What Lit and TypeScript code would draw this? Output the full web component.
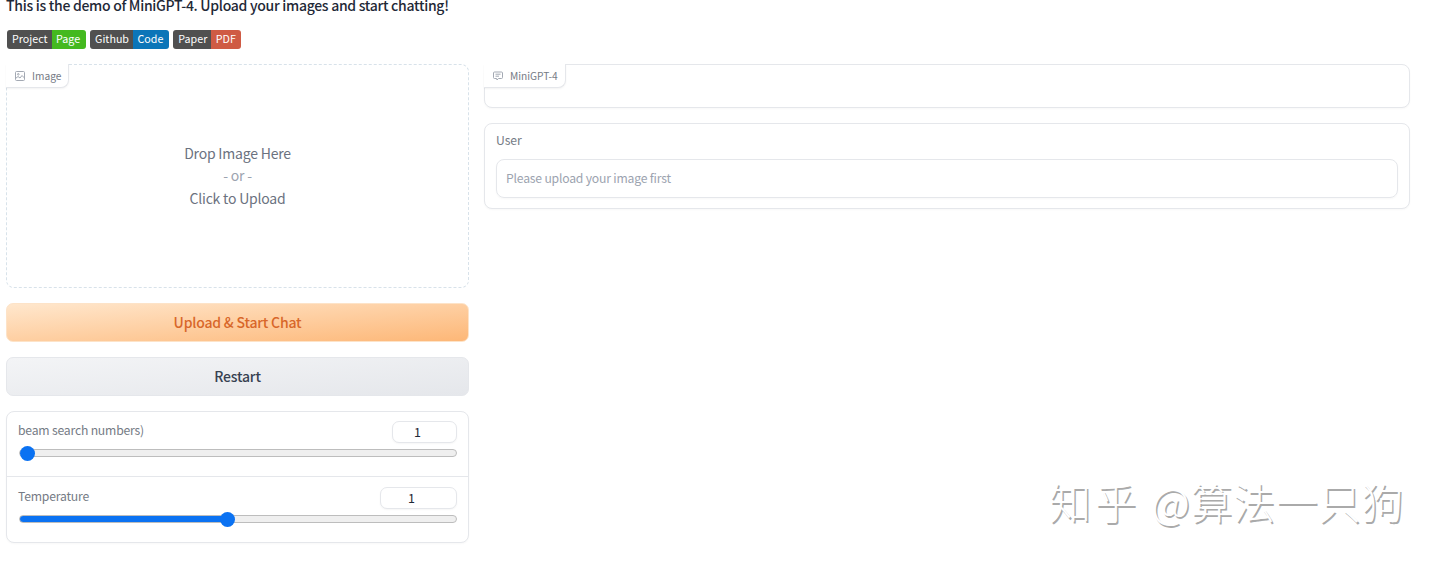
import { LitElement, html, css } from "lit";
import { customElement } from "lit/decorators.js";

@customElement("app-slider")
class AppSlider extends LitElement {
  static properties = { label: {}, pct: { type: Number }, numw: { type: Number } };
  label = "";
  pct = 0;
  numw = 65;
  static styles = css`
    :host { display: block; padding: 9px 11px 0 11px; height: 55px; box-sizing: content-box; }
    :host(.second) { padding-top: 10px; }
    .top { display: flex; justify-content: space-between; align-items: flex-start; height: 22px; }
    .lab { font-size: 12.2px; letter-spacing: -0.2px; color: #757b85; line-height: 18px; }
    .num { height: 22px; box-sizing: border-box; border: 1px solid #e5e7eb; border-radius: 7px;
      background: #fff; font: 12.5px/20px "Noto Sans CJK SC", "Noto Sans", sans-serif; color: #1f2937;
      text-align: center; padding: 0 14px 0 0; box-shadow: 0 1px 2px rgba(0,0,0,.04); }
    input { -webkit-appearance: none; appearance: none; display: block; width: 438px; height: 16px;
      margin: 2px 0 0 1px; background: transparent; outline: none; }
    input::-webkit-slider-runnable-track { height: 8px; border-radius: 4px; box-sizing: border-box;
      border: 1px solid #bdbdbd; background: linear-gradient(to right, #0b72f2 var(--p), #efefef var(--p)); }
    input::-webkit-slider-thumb { -webkit-appearance: none; width: 15px; height: 15px; border-radius: 50%;
      background: #0b72f2; margin-top: -4.5px; border: 0; }
  `;
  render() {
    return html`<div class="top"><span class="lab">${this.label}</span>
      <div class="num" style="width:${this.numw}px">1</div></div>
      <input type="range" min="0" max="100" step="0.1" .value=${String(this.pct)} style="--p:${this.pct}%" />`;
  }
}

@customElement("app-root")
class AppRoot extends LitElement {
  static styles = css`
    :host { display: block; width: 1440px; height: 564px; overflow: hidden; position: relative; background: #fff;
      font-family: "Noto Sans CJK SC", "Noto Sans", sans-serif; color: #374151; }
    .wrap { padding: 0 30px 0 6px; }
    .intro { margin: -5px 0 0 0; font-size: 14px; letter-spacing: -0.29px; line-height: 20px; font-weight: 500; color: #1f2937; white-space: nowrap; }
    .badges { display: flex; gap: 4.5px; margin: 15px 0 0 1px; height: 19px; }
    .badge { display: flex; height: 18.5px; border-radius: 3px; overflow: hidden; font-size: 10.7px; line-height: 18px; color: #fff; }
    .badge .k { background: #505050; padding: 0 4px 0 5px; }
    .badge .v { padding: 0 5.5px 0 4.5px; }
    .g { background: #44b91f; } .b { background: #0b75b8; } .r { background: #cf5b44; }
    .cols { display: grid; grid-template-columns: 463px 926px; gap: 15px; margin-top: 15px; align-items: start; }
    .col { display: flex; flex-direction: column; gap: 15px; }
    .panel { border: 1px solid #e5e7eb; border-radius: 8px; background: #fff; box-sizing: border-box; position: relative; box-shadow: 0 1px 2px rgba(0,0,0,.03); }
    .tag { display: flex; align-items: center; gap: 7px; height: 24px; box-sizing: border-box; padding: 0 7px 0 9px; width: max-content;
      margin: -1px 0 0 -1px; border: 1px solid #e5e7eb; border-top: 0; border-left: 0; border-radius: 0 0 8px 0;
      font-size: 10.2px; color: #757b85; background: #fff; box-shadow: 0 1px 2px rgba(0,0,0,.05); }
    .tag svg { display: block; }
    .drop { height: 224px; border: 1px dashed #d8e2ea; box-shadow: none; display: flex; flex-direction: column; }
    .dropt { flex: 1; display: flex; flex-direction: column; align-items: center; justify-content: center;
      font-size: 14px; letter-spacing: -0.2px; line-height: 22.5px; color: #6b7280; padding-bottom: 24px; }
    .dropt span:nth-child(2) { color: #9ca3af; }
    .btn { height: 39px; border-radius: 7px; display: flex; align-items: center; justify-content: center;
      font-size: 14px; letter-spacing: -0.2px; font-weight: 500; box-sizing: border-box; padding-bottom: 1px; }
    .prim { background: linear-gradient(to bottom right, #ffe7cd, #fdb777); border: 1px solid #fde3c8; color: #d8672a; }
    .sec { background: linear-gradient(to bottom right, #f3f4f6, #e5e7eb); border: 1px solid #e5e7eb; color: #374151; }
    .sliders { height: 132px; }
    .sliders app-slider + app-slider { border-top: 1px solid #e5e7eb; }
    .chat { height: 44px; }
    .user { height: 86px; padding: 8px 11px 10px; display: flex; flex-direction: column; }
    .ulabel { font-size: 12.2px; letter-spacing: -0.1px; line-height: 17px; color: #757b85; }
    .uinput { margin-top: 10px; height: 39px; box-sizing: border-box; border: 1px solid #e5e7eb; border-radius: 8px;
      padding: 0 9px 2px; display: flex; align-items: center; font-size: 12.2px; letter-spacing: -0.2px; color: #9ca3af; box-shadow: 0 1px 2px rgba(0,0,0,.03); }
    .mark { position: absolute; left: 1049px; top: 474px; font-family: "Noto Sans CJK SC", sans-serif; font-weight: 300; font-size: 42px; line-height: 54px; letter-spacing: .7px;
      color: #fff; text-shadow: 1.5px 1.5px 0 #aaa; white-space: pre; word-spacing: 1.5px; }
    .mark span { letter-spacing: 3.5px; }
  `;
  render() {
    return html`<div class="wrap">
      <p class="intro">This is the demo of MiniGPT-4. Upload your images and start chatting!</p>
      <div class="badges">
        <div class="badge"><span class="k">Project</span><span class="v g">Page</span></div>
        <div class="badge"><span class="k">Github</span><span class="v b">Code</span></div>
        <div class="badge"><span class="k">Paper</span><span class="v r">PDF</span></div>
      </div>
      <div class="cols">
        <div class="col">
          <div class="panel drop">
            <div class="tag">
              <svg width="10" height="10" viewBox="0 0 10 10" fill="none" stroke="#a3a9b3" stroke-width="1"><rect x=".5" y=".5" width="9" height="9" rx="1"/><circle cx="3.3" cy="3.3" r=".8"/><path d="M.5 7.5 3 5.5l2 1.5 2-2.5 2.5 2.5"/></svg>
              <span>Image</span>
            </div>
            <div class="dropt"><span>Drop Image Here</span><span>- or -</span><span>Click to Upload</span></div>
          </div>
          <div class="btn prim">Upload &amp; Start Chat</div>
          <div class="btn sec">Restart</div>
          <div class="panel sliders">
            <app-slider label="beam search numbers)" .pct=${0} .numw=${65}></app-slider>
            <app-slider class="second" label="Temperature" .pct=${47.4} .numw=${77}></app-slider>
          </div>
        </div>
        <div class="col">
          <div class="panel chat">
            <div class="tag">
              <svg width="10" height="10" viewBox="0 0 10 10" fill="none" stroke="#a3a9b3" stroke-width="1"><path d="M1.5 1h7a1 1 0 0 1 1 1v4.5a1 1 0 0 1-1 1H5.5L4 9 3.6 7.5H1.5a1 1 0 0 1-1-1V2a1 1 0 0 1 1-1z"/><path d="M2.5 3.2h5M2.5 5.2h3.5"/></svg>
              <span>MiniGPT-4</span>
            </div>
          </div>
          <div class="panel user">
            <div class="ulabel">User</div>
            <div class="uinput">Please upload your image first</div>
          </div>
        </div>
      </div>
    </div>
    <div class="mark"><span>知乎</span> @算法一只狗</div>`;
  }
}
